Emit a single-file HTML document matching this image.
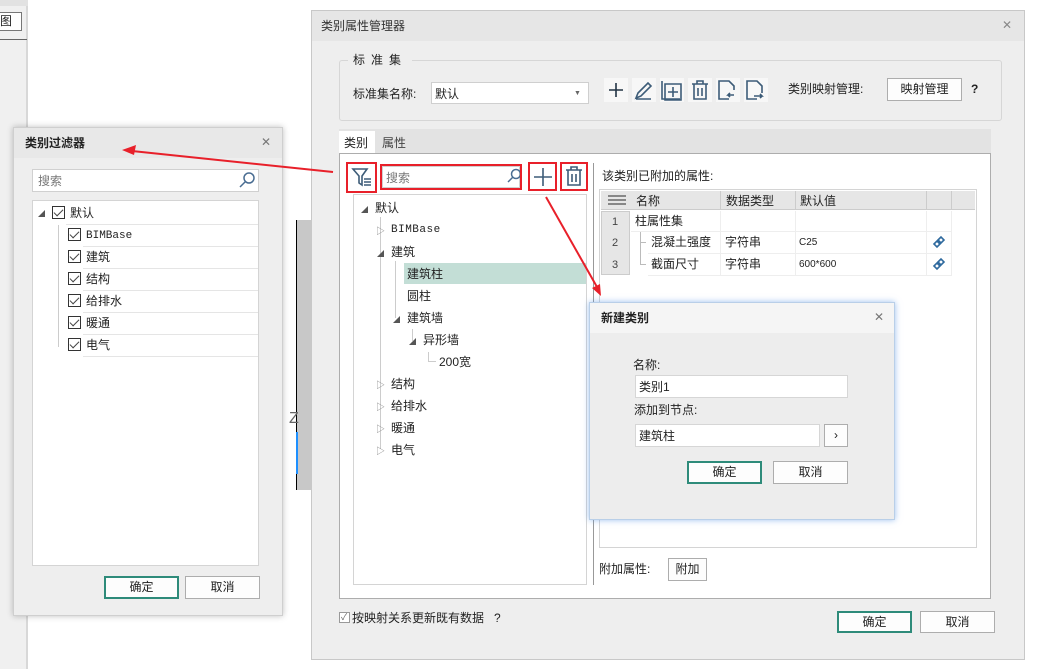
<!DOCTYPE html>
<html><head><meta charset="utf-8"><style>
*{margin:0;padding:0;box-sizing:border-box}
body{width:1037px;height:669px;position:relative;overflow:hidden;background:#fff;font-family:"Liberation Sans","Noto Sans CJK SC",sans-serif;font-size:12px;color:#222}
.a{position:absolute}
.t{position:absolute;white-space:nowrap;line-height:14px}
.box{position:absolute;background:#fff;border:1px solid #d4d4d4}
.btn{position:absolute;background:#fdfdfd;border:1px solid #adadad;text-align:center;line-height:20px}
.ok{border:2px solid #2e8b7a;line-height:18px}
.rb{position:absolute;border:2px solid #e8202a}
.cb{position:absolute;width:13px;height:13px;border:1px solid #333;background:#fff}
.cb:after{content:"";position:absolute;left:3px;top:0px;width:4px;height:8px;border:solid #444;border-width:0 1.5px 1.5px 0;transform:rotate(45deg)}
</style></head><body>
<!-- left app strip -->
<div class="a" style="left:0;top:0;width:28px;height:669px;background:#f0f0f0;border-right:2px solid #d8d8d8"></div>
<div class="a" style="left:0;top:0;width:28px;height:6px;background:#e2e2e2"></div>
<div class="a" style="left:0;top:12px;width:22px;height:19px;border:1px solid #777;border-left:none;background:#fff"></div>
<div class="t" style="left:0;top:14px;font-size:12px">图</div>
<div class="a" style="left:0;top:39px;width:27px;height:1px;background:#666"></div>
<!-- 3d object -->
<div class="a" style="left:296px;top:220px;width:15px;height:270px;background:#c8c8c8;border-left:1px solid #000"></div>
<div class="t" style="left:289px;top:412px;color:#666;font-size:16px">Z</div>
<div class="a" style="left:296px;top:432px;width:2px;height:42px;background:#1e90ff"></div>
<!-- main dialog -->
<div class="a" style="left:311px;top:10px;width:714px;height:650px;background:#eeeeee;border:1px solid #c8c8c8"></div>
<div class="a" style="left:312px;top:11px;width:712px;height:30px;background:#e6e6e6"></div>
<div class="t" style="left:321px;top:19px;color:#333">类别属性管理器</div>
<div class="t" style="left:1002px;top:18px;color:#888">✕</div>
<div class="a" style="left:339px;top:60px;width:663px;height:61px;border:1px solid #d6d6d6;border-radius:3px"></div>
<div class="t" style="left:348px;top:53px;background:#eee;padding:0 5px;letter-spacing:6px">标准集</div>
<div class="t" style="left:353px;top:87px">标准集名称:</div>
<div class="box" style="left:431px;top:82px;width:158px;height:22px;border-color:#cfcfcf"></div>
<div class="t" style="left:435px;top:87px">默认</div>
<div class="t" style="left:574px;top:87px;font-size:7px;color:#666">▼</div>
<!-- toolbar icons -->
<svg class="a" style="left:604px;top:78px" width="170" height="24" viewBox="0 0 170 24" fill="none" stroke="#3d5c78" stroke-width="1.6">
<rect x="0" y="0" width="24" height="24" fill="#f7f7f7" stroke="none"/><path d="M12 5v14M5 12h14" stroke="#234"/>
<rect x="28" y="0" width="24" height="24" fill="#f7f7f7" stroke="none"/><path d="M32 20l2-5 10-10 3 3-10 10z M32 21h15"/>
<rect x="56" y="0" width="24" height="24" fill="#f7f7f7" stroke="none"/><path d="M58 3v18h18 M61 6h16v16h-16z M69 9v10M64 14h10"/>
<rect x="84" y="0" width="24" height="24" fill="#f7f7f7" stroke="none"/><path d="M88 6h16M93 6v-3h6v3M90 6v15h12v-15M94 10v8M98 10v8"/>
<rect x="112" y="0" width="24" height="24" fill="#f7f7f7" stroke="none"/><path d="M125 21h-10v-18h10l5 5v4 M130 17h-6l2-2M124 17l2 2"/>
<rect x="140" y="0" width="24" height="24" fill="#f7f7f7" stroke="none"/><path d="M153 21h-10v-18h10l5 5v7 M150 18h8l-2-2M158 18l-2 2"/>
</svg>
<div class="t" style="left:788px;top:82px">类别映射管理:</div>
<div class="btn" style="left:887px;top:78px;width:75px;height:23px">映射管理</div>
<div class="t" style="left:971px;top:82px;font-weight:bold">?</div>
<!-- tabs -->
<div class="a" style="left:339px;top:129px;width:652px;height:25px;background:#e3e3e3"></div>
<div class="a" style="left:339px;top:131px;width:36px;height:23px;background:#fff"></div>
<div class="t" style="left:344px;top:136px">类别</div>
<div class="t" style="left:382px;top:136px;color:#444">属性</div>
<div class="a" style="left:339px;top:153px;width:652px;height:446px;background:#fff;border:1px solid #adadad"></div>
<!-- filter/search row -->
<svg class="a" style="left:350px;top:165px" width="24" height="24" viewBox="0 0 24 24" fill="none" stroke="#3d5c78" stroke-width="1.6"><path d="M3 4h14l-5 7v9l-3-2v-7z M14 14h7M14 17h7M14 20h7"/></svg>
<div class="box" style="left:382px;top:166px;width:138px;height:22px;border-color:#d0d0d0"></div>
<div class="t" style="left:386px;top:171px;color:#777">搜索</div>
<svg class="a" style="left:506px;top:168px" width="16" height="16" fill="none" stroke="#4a6d92" stroke-width="1.5"><circle cx="10" cy="6" r="4.5"/><path d="M7 9l-5 5"/></svg>
<svg class="a" style="left:530px;top:164px" width="26" height="26" fill="none" stroke="#3d5c78" stroke-width="1.6"><path d="M13 4v18M4 13h18"/></svg>
<svg class="a" style="left:562px;top:164px" width="24" height="26" fill="none" stroke="#3d5c78" stroke-width="1.6"><path d="M4 6h16M9 6v-3h6v3M6 6v15h12v-15M10 10v8M14 10v8"/></svg>
<div class="rb" style="left:346px;top:162px;width:31px;height:31px"></div>
<div class="rb" style="left:380px;top:164px;width:142px;height:26px"></div>
<div class="rb" style="left:528px;top:162px;width:29px;height:29px"></div>
<div class="rb" style="left:560px;top:162px;width:28px;height:29px"></div>
<!-- tree -->
<div class="box" style="left:353px;top:194px;width:234px;height:391px"></div>
<div class="a" style="left:380px;top:217px;width:1px;height:232px;background:#ccc"></div>
<div class="a" style="left:395px;top:261px;width:1px;height:57px;background:#ccc"></div>
<div class="a" style="left:412px;top:329px;width:1px;height:12px;background:#ccc"></div>
<div class="a" style="left:428px;top:352px;width:1px;height:10px;background:#ccc"></div>
<div class="a" style="left:428px;top:361px;width:8px;height:1px;background:#ccc"></div>
<div class="a" style="left:404px;top:263px;width:182px;height:21px;background:#c3ded6"></div>
<div class="t" style="left:361px;top:204px;font-size:7px;color:#555">◢</div>
<div class="t" style="left:375px;top:201px">默认</div>
<div class="t" style="left:376px;top:224px;font-size:9px;color:#888">▷</div>
<div class="t" style="left:391px;top:223px;font-family:'Liberation Mono',monospace;font-size:11px;letter-spacing:0.5px">BIMBase</div>
<div class="t" style="left:377px;top:248px;font-size:7px;color:#555">◢</div>
<div class="t" style="left:391px;top:245px">建筑</div>
<div class="t" style="left:407px;top:267px">建筑柱</div>
<div class="t" style="left:407px;top:289px">圆柱</div>
<div class="t" style="left:393px;top:314px;font-size:7px;color:#555">◢</div>
<div class="t" style="left:407px;top:311px">建筑墙</div>
<div class="t" style="left:409px;top:336px;font-size:7px;color:#555">◢</div>
<div class="t" style="left:423px;top:333px">异形墙</div>
<div class="t" style="left:439px;top:355px">200宽</div>
<div class="t" style="left:376px;top:378px;font-size:9px;color:#888">▷</div><div class="t" style="left:391px;top:377px">结构</div>
<div class="t" style="left:376px;top:400px;font-size:9px;color:#888">▷</div><div class="t" style="left:391px;top:399px">给排水</div>
<div class="t" style="left:376px;top:422px;font-size:9px;color:#888">▷</div><div class="t" style="left:391px;top:421px">暖通</div>
<div class="t" style="left:376px;top:444px;font-size:9px;color:#888">▷</div><div class="t" style="left:391px;top:443px">电气</div>
<div class="a" style="left:593px;top:163px;width:1px;height:422px;background:#999"></div>
<!-- right panel -->
<div class="t" style="left:602px;top:169px">该类别已附加的属性:</div>
<div class="a" style="left:599px;top:189px;width:378px;height:359px;border:1px solid #d4d4d4"></div>
<div class="a" style="left:601px;top:191px;width:374px;height:19px;background:#e6e6e6;border-bottom:1px solid #ccc"></div>
<div class="a" style="left:608px;top:195px;width:18px;height:2px;background:#888;box-shadow:0 4px #888,0 8px #888"></div>
<div class="t" style="left:636px;top:194px">名称</div>
<div class="a" style="left:720px;top:191px;width:1px;height:19px;background:#ccc"></div>
<div class="t" style="left:726px;top:194px">数据类型</div>
<div class="a" style="left:795px;top:191px;width:1px;height:19px;background:#ccc"></div>
<div class="t" style="left:800px;top:194px">默认值</div>
<div class="a" style="left:926px;top:191px;width:1px;height:19px;background:#ccc"></div>
<div class="a" style="left:951px;top:191px;width:1px;height:19px;background:#ccc"></div>
<div class="a" style="left:601px;top:211px;width:29px;height:64px;background:#e6e6e6;border:1px solid #ccc"></div>
<div class="t" style="left:612px;top:215px;font-size:11px;color:#444">1</div>
<div class="t" style="left:612px;top:236px;font-size:11px;color:#444">2</div>
<div class="t" style="left:612px;top:258px;font-size:11px;color:#444">3</div>
<div class="a" style="left:631px;top:231px;width:321px;height:1px;background:#eee"></div>
<div class="a" style="left:648px;top:253px;width:304px;height:1px;background:#eee"></div>
<div class="a" style="left:648px;top:275px;width:304px;height:1px;background:#eee"></div>
<div class="a" style="left:720px;top:211px;width:1px;height:64px;background:#eee"></div>
<div class="a" style="left:795px;top:211px;width:1px;height:64px;background:#eee"></div>
<div class="a" style="left:926px;top:211px;width:1px;height:64px;background:#eee"></div>
<div class="a" style="left:951px;top:211px;width:1px;height:64px;background:#eee"></div>
<div class="a" style="left:640px;top:232px;width:1px;height:32px;background:#bbb"></div>
<div class="a" style="left:640px;top:242px;width:6px;height:1px;background:#bbb"></div>
<div class="a" style="left:640px;top:264px;width:6px;height:1px;background:#bbb"></div>
<div class="t" style="left:635px;top:214px">柱属性集</div>
<div class="t" style="left:651px;top:235px">混凝土强度</div>
<div class="t" style="left:725px;top:235px">字符串</div>
<div class="t" style="left:799px;top:236px;font-size:10px">C25</div>
<div class="t" style="left:651px;top:257px">截面尺寸</div>
<div class="t" style="left:725px;top:257px">字符串</div>
<div class="t" style="left:799px;top:258px;font-size:10px">600*600</div>
<svg class="a" style="left:932px;top:235px" width="14" height="14" fill="none" stroke="#2f6a9e" stroke-width="1.6"><path d="M2 9l3-3 3 3-3 3z M6 5l3-3 3 3-3 3z"/></svg>
<svg class="a" style="left:932px;top:257px" width="14" height="14" fill="none" stroke="#2f6a9e" stroke-width="1.6"><path d="M2 9l3-3 3 3-3 3z M6 5l3-3 3 3-3 3z"/></svg>
<div class="t" style="left:599px;top:562px">附加属性:</div>
<div class="btn" style="left:668px;top:558px;width:39px;height:23px">附加</div>
<!-- bottom -->
<div class="a" style="left:339px;top:612px;width:11px;height:11px;border:1px solid #999;background:#fff"></div>
<div class="t" style="left:341px;top:610px;font-size:9px;color:#666">✓</div>
<div class="t" style="left:352px;top:611px">按映射关系更新既有数据</div>
<div class="t" style="left:494px;top:611px">?</div>
<div class="btn ok" style="left:837px;top:611px;width:75px;height:22px">确定</div>
<div class="btn" style="left:920px;top:611px;width:75px;height:22px">取消</div>
<!-- filter dialog -->
<div class="a" style="left:13px;top:127px;width:270px;height:489px;background:#eeeeee;border:1px solid #cfcfcf;box-shadow:0 0 6px rgba(0,0,0,.25)"></div>
<div class="a" style="left:14px;top:128px;width:268px;height:30px;background:#e8e8e8"></div>
<div class="t" style="left:25px;top:136px;font-weight:bold">类别过滤器</div>
<div class="t" style="left:261px;top:135px;color:#777">✕</div>
<div class="box" style="left:32px;top:169px;width:227px;height:23px;border-color:#d0d0d0"></div>
<div class="t" style="left:38px;top:174px;color:#777">搜索</div>
<svg class="a" style="left:238px;top:171px" width="18" height="18" fill="none" stroke="#4a6d92" stroke-width="1.5"><circle cx="11" cy="7" r="5"/><path d="M7 11l-5 5"/></svg>
<div class="box" style="left:32px;top:200px;width:227px;height:366px"></div>
<div class="a" style="left:58px;top:225px;width:1px;height:122px;background:#ccc"></div>
<div class="t" style="left:38px;top:208px;font-size:7px;color:#555">◢</div>
<div class="cb" style="left:52px;top:206px"></div><div class="t" style="left:70px;top:206px">默认</div>
<div class="a" style="left:66px;top:224px;width:192px;height:1px;background:#e5e5e5"></div>
<div class="cb" style="left:68px;top:228px"></div><div class="t" style="left:86px;top:229px;font-family:'Liberation Mono',monospace;font-size:11px">BIMBase</div>
<div class="a" style="left:83px;top:246px;width:175px;height:1px;background:#e5e5e5"></div>
<div class="cb" style="left:68px;top:250px"></div><div class="t" style="left:86px;top:250px">建筑</div>
<div class="a" style="left:83px;top:268px;width:175px;height:1px;background:#e5e5e5"></div>
<div class="cb" style="left:68px;top:272px"></div><div class="t" style="left:86px;top:272px">结构</div>
<div class="a" style="left:83px;top:290px;width:175px;height:1px;background:#e5e5e5"></div>
<div class="cb" style="left:68px;top:294px"></div><div class="t" style="left:86px;top:294px">给排水</div>
<div class="a" style="left:83px;top:312px;width:175px;height:1px;background:#e5e5e5"></div>
<div class="cb" style="left:68px;top:316px"></div><div class="t" style="left:86px;top:316px">暖通</div>
<div class="a" style="left:83px;top:334px;width:175px;height:1px;background:#e5e5e5"></div>
<div class="cb" style="left:68px;top:338px"></div><div class="t" style="left:86px;top:338px">电气</div>
<div class="a" style="left:83px;top:356px;width:175px;height:1px;background:#e5e5e5"></div>
<div class="btn ok" style="left:104px;top:576px;width:75px;height:23px">确定</div>
<div class="btn" style="left:185px;top:576px;width:75px;height:23px">取消</div>
<!-- new category dialog -->
<div class="a" style="left:589px;top:302px;width:306px;height:218px;background:#ededed;border:1px solid #b9cfe8;box-shadow:0 0 6px rgba(90,150,230,.6)"></div>
<div class="a" style="left:590px;top:303px;width:304px;height:30px;background:#f5f5f5"></div>
<div class="t" style="left:601px;top:311px;font-weight:bold">新建类别</div>
<div class="t" style="left:874px;top:310px;color:#777">✕</div>
<div class="t" style="left:633px;top:358px">名称:</div>
<div class="box" style="left:635px;top:375px;width:213px;height:23px;border-color:#d6d6d6"></div>
<div class="t" style="left:639px;top:380px">类别1</div>
<div class="t" style="left:634px;top:403px">添加到节点:</div>
<div class="box" style="left:635px;top:424px;width:185px;height:23px;border-color:#d6d6d6"></div>
<div class="t" style="left:639px;top:429px">建筑柱</div>
<div class="btn" style="left:824px;top:424px;width:24px;height:23px">›</div>
<div class="btn ok" style="left:687px;top:461px;width:75px;height:23px">确定</div>
<div class="btn" style="left:773px;top:461px;width:75px;height:23px">取消</div>
<!-- arrows -->
<svg class="a" style="left:0;top:0" width="1037" height="669">
<path d="M333 172L132 151" stroke="#e8202a" stroke-width="2"/>
<path d="M122 150l14-5-2 10z" fill="#e8202a"/>
<path d="M546 197L597 287" stroke="#e8202a" stroke-width="2"/>
<path d="M601 296l-9-8 8-4z" fill="#e8202a"/>
</svg>
</body></html>
